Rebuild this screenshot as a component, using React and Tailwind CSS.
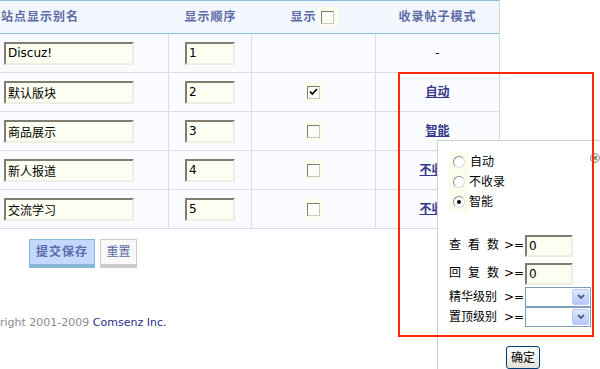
import React from "react";

const rows = [
  { name: "Discuz!", order: "1", show: null, mode: "-" },
  { name: "默认版块", order: "2", show: true, mode: "自动" },
  { name: "商品展示", order: "3", show: false, mode: "智能" },
  { name: "新人报道", order: "4", show: false, mode: "不收录" },
  { name: "交流学习", order: "5", show: false, mode: "不收录" },
];

const Checkbox = ({ checked }) => (
  <span className="flex h-[20px] w-[20px] items-center justify-center bg-[#fbfcee]">
    <span className="flex h-[13px] w-[13px] items-center justify-center border border-t-[#7e7d72] border-l-[#7e7d72] border-b-[#c9c8bc] border-r-[#c9c8bc] bg-[#fcfcf8]">
      {checked && (
        <svg width="9" height="8" viewBox="0 0 9 8">
          <path d="M1 3.5 L3.3 6 L8 1" fill="none" stroke="#000" strokeWidth="1.8" />
        </svg>
      )}
    </span>
  </span>
);

const Radio = ({ checked }) => (
  <span className="flex h-[20px] w-[20px] items-center justify-center bg-[#fbfcee]">
    <span className="flex h-[12px] w-[12px] items-center justify-center rounded-full border border-t-[#8f8f86] border-l-[#8f8f86] border-b-[#dedcd2] border-r-[#dedcd2] bg-white">
      {checked && <span className="h-[4px] w-[4px] rounded-full bg-black" />}
    </span>
  </span>
);

const Field = ({ value, width, height = 23 }) => (
  <input
    readOnly
    value={value}
    style={{ width, height }}
    className="border-2 border-t-[#807d70] border-l-[#807d70] border-b-[#efeee2] border-r-[#efeee2] bg-[#fdfef2] px-[2px] text-[12px] text-black outline-none"
  />
);

const Select = () => (
  <div className="flex h-[20px] w-[66px] justify-end border border-[#7f9db9] bg-white p-[1px]">
    <div className="flex w-[17px] items-center justify-center rounded-[2px] border border-[#b9cdf7] bg-gradient-to-b from-[#dde8fe] to-[#b4c8f6]">
      <svg width="8" height="6" viewBox="0 0 8 6">
        <path d="M1 1 L4 4 L7 1" fill="none" stroke="#4d6185" strokeWidth="1.8" />
      </svg>
    </div>
  </div>
);

const LimitRow = ({ label, children, className }) => (
  <div className={`flex items-center ${className}`}>
    <span className="flex w-[50px] justify-between text-[12px] text-black">
      {label.split(" ").map((c, i) => (
        <span key={i}>{c}</span>
      ))}
    </span>
    <span className="ml-[5px] w-[20px] text-[12px] text-black">&gt;=</span>
    <span className="ml-[1px]">{children}</span>
  </div>
);

export default function App() {
  return (
    <div className="relative h-[369px] w-[600px] overflow-hidden bg-white font-['DejaVu_Sans','Noto_Sans_CJK_SC',sans-serif]">
      {/* Forum table */}
      <div className="w-[500px] border-t border-r border-t-[#8cbfdc] border-r-[#d5dbe6]">
        <div className="grid h-[33px] grid-cols-[169px_83px_124px_123px] items-center border-b border-[#8cbfdc] bg-[#f1f7fd] text-[12px] font-bold tracking-[1px] text-[#5d6aa6]">
          <div className="pl-[1px]">站点显示别名</div>
          <div className="text-center">显示顺序</div>
          <div className="flex items-center justify-center gap-[1px]">
            <span>显示</span>
            <Checkbox />
          </div>
          <div className="text-center">收录帖子模式</div>
        </div>

        {rows.map((r) => (
          <div
            key={r.order}
            className="grid h-[39px] grid-cols-[169px_83px_124px_123px] border-b border-[#d8dde6] bg-[#f9fbfe] text-[12px]"
          >
            <div className="flex items-center border-r border-[#d8dde6] pl-[4px]">
              <Field value={r.name} width={130} />
            </div>
            <div className="flex items-center justify-center border-r border-[#d8dde6]">
              <Field value={r.order} width={50} />
            </div>
            <div className="flex items-center justify-center border-r border-[#d8dde6]">
              {r.show !== null && <Checkbox checked={r.show} />}
            </div>
            <div className="flex items-center justify-center">
              {r.mode === "-" ? (
                <span className="text-black">-</span>
              ) : (
                <a href="#" className="font-bold text-[#35388a] underline">
                  {r.mode}
                </a>
              )}
            </div>
          </div>
        ))}
      </div>

      {/* Submit buttons */}
      <div className="mt-[10px] flex gap-[5px] pl-[29px]">
        <button className="h-[29px] w-[66px] border border-b-4 border-[#86b9d6] bg-[#c4d9ff] text-[12px] font-bold tracking-[1px] text-[#5d6aa6]">
          提交保存
        </button>
        <button className="h-[29px] w-[37px] border border-b-4 border-[#cccccc] bg-[#f9f9f9] text-[12px] text-[#5d6aa6]">
          重置
        </button>
      </div>

      {/* Footer */}
      <div className="mt-[47px] text-[11px] text-[#8c8c8c]">
        right 2001-2009 <span className="text-[#2d2f8a]">Comsenz Inc.</span>
      </div>

      {/* Mode popup */}
      <div className="absolute left-[437px] top-[140px] h-[240px] w-[175px] border border-[#d0d0d0] bg-white pl-[11px] pt-[11px]">
        <span className="absolute left-[152px] top-[12px] flex h-[10px] w-[10px] items-center justify-center rounded-full border border-[#8e8e86] bg-[#efefe6]">
          <svg width="6" height="6" viewBox="0 0 6 6">
            <path d="M1 1 L5 5 M5 1 L1 5" stroke="#6f6f66" strokeWidth="1.2" />
          </svg>
        </span>

        <div className="flex flex-col text-[12px] text-black">
          <label className="flex items-center">
            <Radio />
            <span className="ml-[1px]">自动</span>
          </label>
          <label className="flex items-center">
            <Radio />
            <span>不收录</span>
          </label>
          <label className="flex items-center">
            <Radio checked />
            <span>智能</span>
          </label>
        </div>

        <LimitRow label="查 看 数" className="mt-[21px]">
          <Field value="0" width={48} height={22} />
        </LimitRow>
        <LimitRow label="回 复 数" className="mt-[4px]">
          <Field value="0" width={48} height={22} />
        </LimitRow>
        <LimitRow label="精华级别" className="mt-[2px]">
          <Select />
        </LimitRow>
        <LimitRow label="置顶级别" className="mt-0">
          <Select />
        </LimitRow>

        <button className="ml-[57px] mt-[19px] h-[23px] w-[34px] rounded-[3px] border border-[#003c74] bg-gradient-to-b from-white to-[#e3e1d6] text-[12px] text-black">
          确定
        </button>
      </div>

      {/* Annotation box */}
      <div className="pointer-events-none absolute left-[398px] top-[72px] h-[265px] w-[196px] border-2 border-[#ff2a00]" />
    </div>
  );
}
